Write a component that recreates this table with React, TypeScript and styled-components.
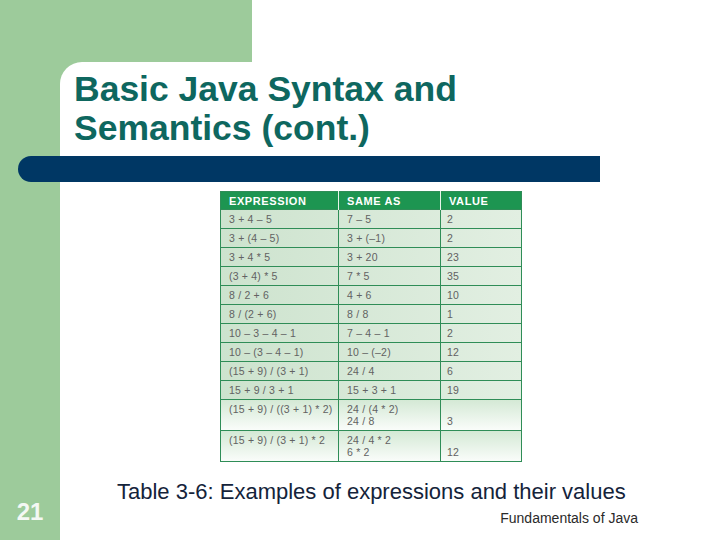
import { styled, createGlobalStyle } from 'styled-components';

const GlobalStyle = createGlobalStyle`
  html, body {
    margin: 0;
    padding: 0;
    background: #ffffff;
  }
  body {
    font-family: "Liberation Sans", Arial, sans-serif;
  }
`;

type Row = {
  expr: string;
  same: string[];
  value: string;
};

const rows: Row[] = [
  { expr: '3 + 4 – 5', same: ['7 – 5'], value: '2' },
  { expr: '3 + (4 – 5)', same: ['3 + (–1)'], value: '2' },
  { expr: '3 + 4 * 5', same: ['3 + 20'], value: '23' },
  { expr: '(3 + 4) * 5', same: ['7 * 5'], value: '35' },
  { expr: '8 / 2 + 6', same: ['4 + 6'], value: '10' },
  { expr: '8 / (2 + 6)', same: ['8 / 8'], value: '1' },
  { expr: '10 – 3 – 4 – 1', same: ['7 – 4 – 1'], value: '2' },
  { expr: '10 – (3 – 4 – 1)', same: ['10 – (–2)'], value: '12' },
  { expr: '(15 + 9) / (3 + 1)', same: ['24 / 4'], value: '6' },
  { expr: '15 + 9 / 3 + 1', same: ['15 + 3 + 1'], value: '19' },
  { expr: '(15 + 9) / ((3 + 1) * 2)', same: ['24 / (4 * 2)', '24 / 8'], value: '3' },
  { expr: '(15 + 9) / (3 + 1) * 2', same: ['24 / 4 * 2', '6 * 2'], value: '12' },
];

const App = () => {
  return (
    <>
      <GlobalStyle />
      <Slide>
        <TopBand />
        <SideBand>
          <SlideNumber>21</SlideNumber>
        </SideBand>
        <Panel>
          <Title>
            Basic Java Syntax and
            <br />
            Semantics (cont.)
          </Title>
          <Rule />
          <ExprTable>
            <colgroup>
              <col style={{ width: 118 }} />
              <col style={{ width: 102 }} />
              <col style={{ width: 81 }} />
            </colgroup>
            <thead>
              <tr>
                <HeadCell>EXPRESSION</HeadCell>
                <HeadCell>SAME AS</HeadCell>
                <HeadCell>VALUE</HeadCell>
              </tr>
            </thead>
            <tbody>
              {rows.map((r) => {
                const tall = r.same.length > 1;
                return (
                  <BodyRow key={r.expr} $tall={tall}>
                    <Cell>
                      <CellBox $tall={tall} $align="start">
                        {r.expr}
                      </CellBox>
                    </Cell>
                    <Cell>
                      <CellBox $tall={tall} $align="start">
                        {r.same.map((s) => (
                          <div key={s}>{s}</div>
                        ))}
                      </CellBox>
                    </Cell>
                    <Cell>
                      <CellBox $tall={tall} $align="end" $inset={6}>
                        {r.value}
                      </CellBox>
                    </Cell>
                  </BodyRow>
                );
              })}
            </tbody>
          </ExprTable>
          <Caption>Table 3-6: Examples of expressions and their values</Caption>
          <Footer>Fundamentals of Java</Footer>
        </Panel>
      </Slide>
    </>
  );
};

const Slide = styled.div`
  width: 720px;
  height: 540px;
  display: grid;
  grid-template-columns: 60px 192px 1fr;
  grid-template-rows: 62px 1fr;
  background: linear-gradient(to right, #9dcb9b 252px, #ffffff 252px);
  overflow: hidden;
`;

const TopBand = styled.div`
  grid-column: 1 / 3;
  grid-row: 1;
`;

const SideBand = styled.div`
  grid-column: 1;
  grid-row: 2;
  display: flex;
  flex-direction: column;
  justify-content: flex-end;
  align-items: center;
  padding-bottom: 14px;
`;

const SlideNumber = styled.div`
  font-family: "Liberation Sans", Arial, sans-serif;
  font-weight: bold;
  font-size: 24px;
  line-height: 28px;
  color: #f4f8f4;
`;

const Panel = styled.div`
  grid-column: 2 / 4;
  grid-row: 2;
  background: #ffffff;
  border-top-left-radius: 22px;
  display: flex;
  flex-direction: column;
  padding-top: 8px;
  min-width: 0;
`;

const Title = styled.h1`
  margin: 0 0 8px 14px;
  font-family: "Liberation Sans", Arial, sans-serif;
  font-weight: bold;
  font-size: 35.5px;
  line-height: 39px;
  color: #0e675f;
`;

const Rule = styled.div`
  margin-left: -42px;
  width: 582px;
  height: 26px;
  background: #003764;
  border-radius: 13px 0 0 13px;
`;

const ExprTable = styled.table`
  margin: 9px 0 0 160px;
  width: 301px;
  border-collapse: collapse;
  table-layout: fixed;
  border: 1px solid #2f8d57;
  font-family: "Liberation Sans", Arial, sans-serif;
`;

const HeadCell = styled.th`
  height: 17px;
  padding: 0 0 0 8px;
  background: #1d9551;
  color: #ffffff;
  font-size: 11px;
  font-weight: bold;
  letter-spacing: 0.6px;
  text-align: left;
  border-left: 1px solid #e8f3ea;
  &:first-child {
    border-left: none;
  }
`;

const BodyRow = styled.tr<{ $tall: boolean }>`
  background: ${(p) =>
    p.$tall
      ? 'linear-gradient(to bottom, #d4e9d5, #fbfdfb)'
      : 'linear-gradient(to right, #cde3ce, #e2efe2)'};
`;

const Cell = styled.td`
  padding: 0;
  border: 1px solid #2f8d57;
`;

const CellBox = styled.div<{ $tall: boolean; $align: 'start' | 'end'; $inset?: number }>`
  box-sizing: border-box;
  height: ${(p) => (p.$tall ? 30 : 18)}px;
  display: flex;
  flex-direction: column;
  justify-content: ${(p) => (!p.$tall ? 'center' : p.$align === 'end' ? 'flex-end' : 'flex-start')};
  padding: ${(p) => (p.$tall ? '3px 0' : '0')};
  padding-left: ${(p) => p.$inset ?? 8}px;
  color: #626262;
  font-size: 10.5px;
  line-height: 12px;
  letter-spacing: 0.2px;
  white-space: nowrap;
`;

const Caption = styled.div`
  margin: 17px 0 0 57px;
  font-family: "Liberation Sans", Arial, sans-serif;
  font-size: 22px;
  line-height: 26px;
  color: #14233a;
`;

const Footer = styled.div`
  align-self: flex-end;
  margin: 5px 82px 0 0;
  font-family: "Liberation Sans", Arial, sans-serif;
  font-size: 14px;
  line-height: 16px;
  color: #2a2a2a;
`;

export default App;
